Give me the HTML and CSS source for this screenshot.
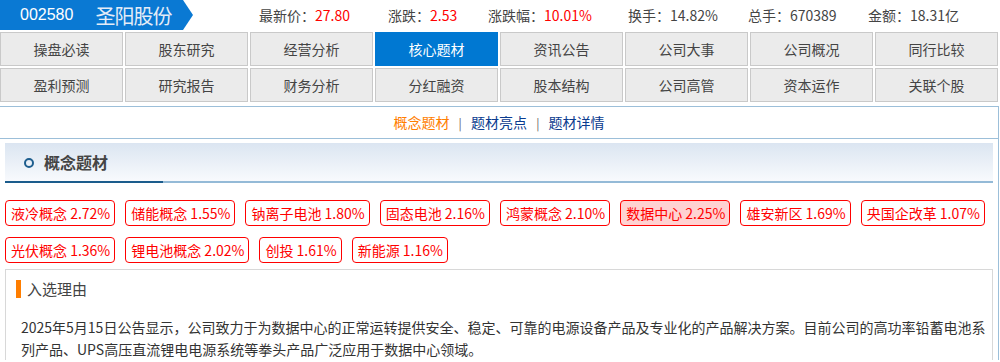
FILE: index.html
```html
<!DOCTYPE html>
<html lang="zh-CN">
<head>
    <meta charset="UTF-8">
    <meta name="viewport" content="width=device-width, initial-scale=1.0">
    <title>圣阳股份 - 核心题材</title>
    <link rel="stylesheet" href="styles.css">
</head>
<body>

    <div class="header">
        <div class="banner">
            <div class="banner-body">
                <span class="code">002580</span>
                <span class="name">圣阳股份</span>
            </div>
            <div class="banner-tip"></div>
        </div>
        <div class="quotes">
            <span class="quote">最新价：<em>27.80</em></span>
            <span class="quote">涨跌：<em>2.53</em></span>
            <span class="quote">涨跌幅：<em>10.01%</em></span>
            <span class="quote">换手：14.82%</span>
            <span class="quote">总手：670389</span>
            <span class="quote">金额：18.31亿</span>
        </div>
    </div>

    <div class="nav">
        <a class="nav-item">操盘必读</a>
        <a class="nav-item">股东研究</a>
        <a class="nav-item">经营分析</a>
        <a class="nav-item active">核心题材</a>
        <a class="nav-item">资讯公告</a>
        <a class="nav-item">公司大事</a>
        <a class="nav-item">公司概况</a>
        <a class="nav-item">同行比较</a>
        <a class="nav-item">盈利预测</a>
        <a class="nav-item">研究报告</a>
        <a class="nav-item">财务分析</a>
        <a class="nav-item">分红融资</a>
        <a class="nav-item">股本结构</a>
        <a class="nav-item">公司高管</a>
        <a class="nav-item">资本运作</a>
        <a class="nav-item">关联个股</a>
    </div>

    <div class="content">
        <div class="subnav">
            <a class="current">概念题材</a>
            <span class="sep">|</span>
            <a>题材亮点</a>
            <span class="sep">|</span>
            <a>题材详情</a>
        </div>

        <div class="section-head">
            <span class="ring"></span>
            <h3>概念题材</h3>
        </div>

        <div class="tags">
            <span class="tag">液冷概念 2.72%</span>
            <span class="tag">储能概念 1.55%</span>
            <span class="tag">钠离子电池 1.80%</span>
            <span class="tag">固态电池 2.16%</span>
            <span class="tag">鸿蒙概念 2.10%</span>
            <span class="tag selected">数据中心 2.25%</span>
            <span class="tag">雄安新区 1.69%</span>
            <span class="tag">央国企改革 1.07%</span>
            <span class="tag">光伏概念 1.36%</span>
            <span class="tag">锂电池概念 2.02%</span>
            <span class="tag">创投 1.61%</span>
            <span class="tag">新能源 1.16%</span>
        </div>

        <div class="reason">
            <div class="reason-title">入选理由</div>
            <p class="reason-text">2025年5月15日公告显示，公司致力于为数据中心的正常运转提供安全、稳定、可靠的电源设备产品及专业化的产品解决方案。目前公司的高功率铅蓄电池系列产品、UPS高压直流锂电电源系统等拳头产品广泛应用于数据中心领域。</p>
        </div>
    </div>

</body>
</html>
```

FILE: styles.css
```css
body {
    margin: 0;
    width: 1000px;
    font-family: "Noto Sans CJK SC", "Liberation Sans", sans-serif;
    font-size: 14px;
    color: #333;
    background: #fff;
}

a {
    text-decoration: none;
    cursor: pointer;
}

/* top bar */
.header {
    display: flex;
    height: 30px;
    align-items: center;
}

.banner {
    display: flex;
    height: 30px;
}

.banner-body {
    width: 183px;
    height: 30px;
    background-color: #0a79d3;
    display: flex;
    align-items: center;
    box-sizing: border-box;
    padding-left: 20px;
}

.banner-tip {
    width: 0;
    height: 0;
    border-top: 15px solid transparent;
    border-bottom: 15px solid transparent;
    border-left: 10px solid #0a79d3;
}

.code {
    font-family: "Liberation Sans", sans-serif;
    font-size: 16px;
    color: #fff;
    margin-right: 22px;
}

.name {
    font-size: 20px;
    color: #e4ecf7;
    letter-spacing: -1px;
}

.quotes {
    margin-left: 66px;
    display: grid;
    grid-template-columns: 129px 100px 140px 120px 120px auto;
    color: #444;
    white-space: nowrap;
}

.quote em {
    font-style: normal;
    color: #f00;
}

/* tab grid */
.nav {
    display: grid;
    grid-template-columns: repeat(8, 123px);
    grid-auto-rows: 34px;
    gap: 2px;
    margin-top: 2px;
}

.nav-item {
    display: flex;
    align-items: center;
    justify-content: center;
    border: 1px solid #c9c9c9;
    background-color: #ebebeb;
    color: #444;
    font-size: 14px;
}

.nav-item.active {
    background-color: #0078d2;
    border-color: #0078d2;
    color: #fff;
}

/* main panel */
.content {
    margin-top: 4px;
    width: 998px;
    border-top: 1px solid #9cbfd9;
    border-right: 1px solid #9cbfd9;
}

.subnav {
    height: 31px;
    line-height: 31px;
    border-bottom: 1px solid #9cbfd9;
    text-align: center;
}

.subnav a {
    color: #0a3b8f;
}

.subnav a.current {
    color: #ff7e00;
}

.subnav .sep {
    color: #666;
    margin: 0 6px;
    font-size: 12px;
}

.section-head {
    margin: 4px 5px 0 5px;
    height: 40px;
    padding-bottom: 2px;
    box-sizing: border-box;
    display: flex;
    align-items: center;
    background:
        linear-gradient(#1b5c8c, #1b5c8c) left bottom / 158px 2px no-repeat,
        linear-gradient(#94bad7, #94bad7) left bottom / 100% 2px no-repeat,
        linear-gradient(#dbe5f1, #f8fafd) left top / 100% 38px no-repeat;
}

.ring {
    width: 6px;
    height: 6px;
    border: 2.5px solid #1e5e8e;
    border-radius: 50%;
    margin-left: 19px;
    margin-right: 10px;
    margin-top: 1px;
}

.section-head h3 {
    margin: 0;
    font-size: 16px;
    font-weight: bold;
    color: #444;
}

.tags {
    display: flex;
    flex-wrap: wrap;
    gap: 11px 10px;
    padding: 17px 5px 0 5px;
}

.tag {
    height: 24px;
    line-height: 24px;
    padding: 0 4px 0 5px;
    border: 1px solid #f00;
    border-radius: 4px;
    color: #f00;
    font-size: 14px;
    white-space: nowrap;
}

.tag.selected {
    background-color: #ffd2d2;
}

.reason {
    margin: 6px 5px 0 5px;
    border: 1px solid #d8d8d8;
    border-bottom: none;
    padding: 10px 6px 0 15px;
}

.reason-title {
    font-size: 15px;
    color: #444;
    line-height: 18px;
    border-left: 5px solid #ff7e00;
    padding-left: 6px;
    margin-left: -5px;
}

.reason-text {
    margin: 18px 0 0 0;
    line-height: 22px;
    color: #333;
}
```
